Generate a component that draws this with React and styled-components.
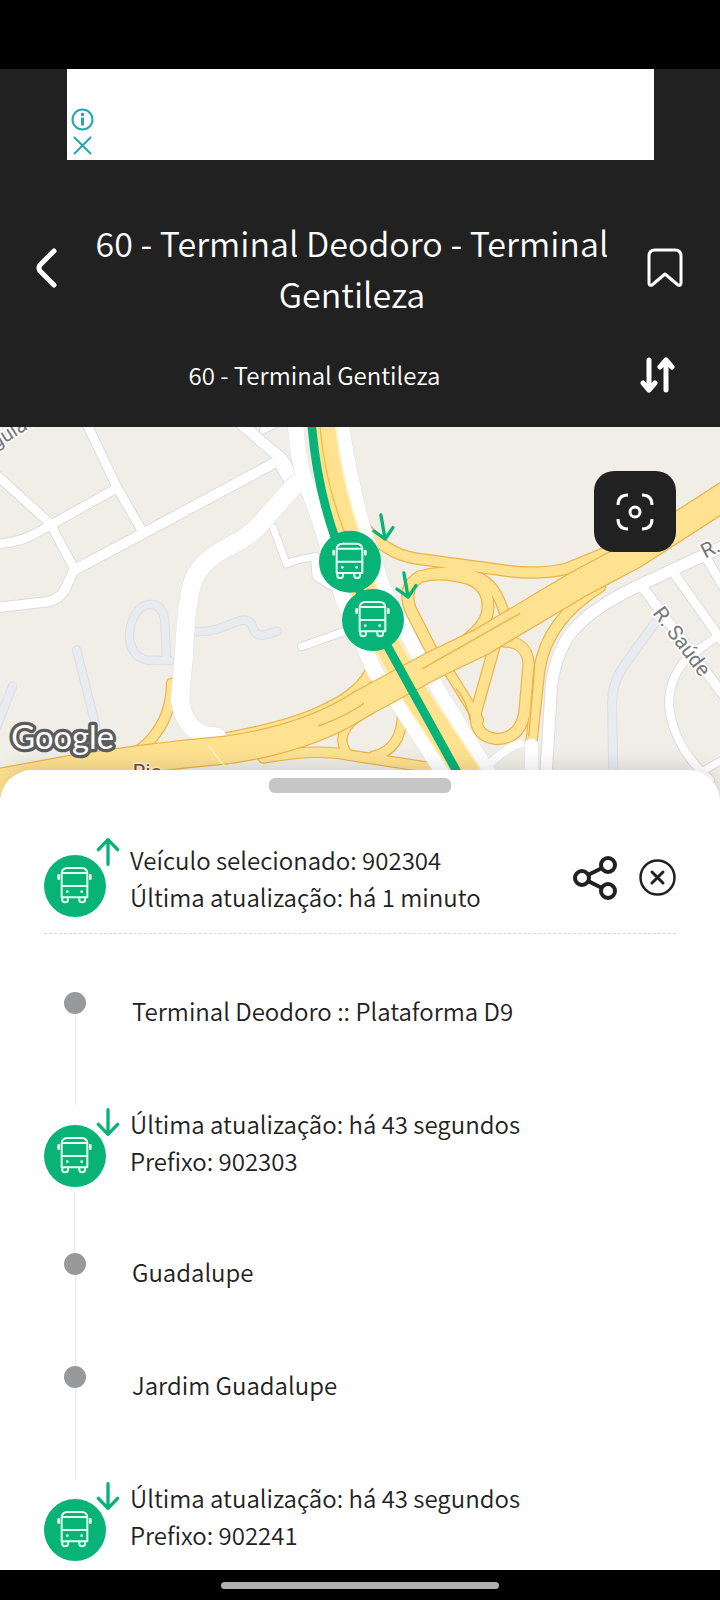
import React from "react";
import styled, { createGlobalStyle } from "styled-components";

const GlobalStyle = createGlobalStyle`
  * {
    box-sizing: border-box;
  }
  body {
    margin: 0;
    background: #fff;
    color: #212121;
    font-family: "Noto Sans CJK JP", "Noto Sans", sans-serif;
    font-size: 24px;
    font-weight: 350;
    line-height: 37px;
  }
`;

const Screen = styled.div`
  display: flex;
  flex-direction: column;
  min-height: 100vh;
`;

const StatusBar = styled.div`
  height: 69px;
  background: #000;
`;

const Header = styled.header`
  background: #212121;
  color: #fff;
  padding-bottom: 34px;
`;

const AdBanner = styled.aside`
  display: flex;
  flex-direction: column;
  justify-content: flex-end;
  align-items: flex-start;
  gap: 5px;
  width: 82%;
  max-width: 587px;
  height: 91px;
  margin: 0 auto 57px;
  padding: 0 4px 5px;
  background: #fff;
`;

const IconButton = styled.button`
  display: flex;
  flex: none;
  padding: 0;
  border: 0;
  background: none;
  color: inherit;
  cursor: pointer;
`;

const AdButton = styled(IconButton)`
  color: #26a5b5;
`;

const TitleRow = styled.div`
  display: flex;
  align-items: center;
  padding: 0 37px 0 35px;
`;

const Title = styled.h1`
  flex: 1;
  margin: 0;
  font-size: 34px;
  font-weight: 350;
  line-height: 51px;
  text-align: center;
`;

const DirectionRow = styled.div`
  display: flex;
  align-items: center;
  margin-top: 37px;
  padding-right: 44px;
`;

const Direction = styled.p`
  flex: 1;
  margin: 0;
  padding-right: 11px;
  text-align: center;
`;

const MapArea = styled.section`
  position: relative;
  height: 376px;
  background: #f0eee7;
`;

const MapCanvas = styled.svg`
  display: block;
  width: 100%;
  height: 100%;
`;

const LocateButton = styled(IconButton)`
  position: absolute;
  top: 44px;
  right: 44px;
  width: 82px;
  height: 81px;
  align-items: center;
  justify-content: center;
  border-radius: 20px;
  background: #212121;
  color: #fff;
`;

const Sheet = styled.main`
  position: relative;
  flex: 1;
  margin-top: -33px;
  padding: 8px 44px 0;
  border-radius: 32px 32px 0 0;
  background: #fff;
  box-shadow: 0 -4px 20px rgba(0, 0, 0, 0.12);
`;

const Handle = styled.div`
  width: 182px;
  height: 15px;
  margin: 0 auto 45px;
  border-radius: 6px;
  background: #c6c6c6;
`;

const Selected = styled.div`
  display: flex;
  align-items: center;
  padding-bottom: 16px;
  border-bottom: 1px dashed #d8d8d8;
`;

const Info = styled.p`
  flex: 1;
  margin: 0 0 0 10px;
`;

const Actions = styled.div`
  display: flex;
  align-items: center;
  gap: 22px;
`;

const Route = styled.ol`
  margin: 58px 0 0;
  padding: 0;
  list-style: none;
`;

const Stop = styled.li`
  display: flex;
  gap: 26px;
  min-height: 113px;
`;

const Vehicle = styled.li`
  display: flex;
  min-height: ${props => (props.$last ? "90px" : "148px")};
`;

const Track = styled.div`
  display: flex;
  flex-direction: column;
  align-items: center;
  width: 62px;
`;

const VehicleTrack = styled(Track)`
  width: 76px;
  padding-top: 3px;
  align-items: flex-start;
`;

const Dot = styled.span`
  width: 22px;
  height: 22px;
  border-radius: 50%;
  background: #97999a;
`;

const Line = styled.span`
  flex: 1;
  width: 1px;
  background: #e9e9e9;
`;

const VehicleLine = styled(Line)`
  margin: 4px 0 0 30px;
`;

const HomeBar = styled.footer`
  display: flex;
  align-items: center;
  justify-content: center;
  height: 30px;
  background: #000;
`;

const HomePill = styled.div`
  width: 278px;
  height: 7px;
  border-radius: 4px;
  background: #b0b0b0;
`;

const GREEN = "#08b378";

const BusBadge = () => (
  <g fill="none" stroke="#e6fff4" strokeWidth="6" strokeLinecap="round">
    <circle cx="93" cy="93" r="93" fill={GREEN} stroke="none" />
    <path d="M53 127V57Q53 39 71 39H112Q130 39 130 57V127Z" strokeLinejoin="round" />
    <path d="M54 54H129M54 93H129" />
    <path d="M44 61V71M139 61V71" strokeWidth="8" />
    <path d="M55 128V135Q55 142 63 142Q72 142 72 135V128M106 128V135Q106 142 114 142Q123 142 123 135V128" />
    <circle cx="70" cy="110" r="4" fill="#e6fff4" stroke="none" />
    <circle cx="113" cy="110" r="4" fill="#e6fff4" stroke="none" />
  </g>
);

const Arrow = ({ up, ...rest }) => (
  <g {...rest}>
    <path
      d={up ? "M0 37V-37M-29 -7L0 -37L29 -7" : "M0 -37V37M-29 7L0 37L29 7"}
      fill="none"
      stroke={GREEN}
      strokeWidth="10"
      strokeLinecap="round"
      strokeLinejoin="round"
    />
  </g>
);

const VehicleIcon = ({ up }) => (
  <svg width="76" height="79" viewBox="0 0 228 237" aria-hidden="true">
    <g transform="translate(0 51)">
      <BusBadge />
    </g>
    <Arrow up={up} transform="translate(192 42)" />
  </svg>
);

// [path, width]
const paleStreets = [
  ["M500 722L494 600Q486 552 450 553Q400 558 388 640Q388 708 440 720L510 722", 22],
  ["M575 635Q620 636 650 628L720 602Q748 596 756 616Q764 648 790 646L832 634", 22],
  ["M230 690L285 910L302 1040", 22],
  ["M38 798L-10 920", 22],
  ["M1975 595L1870 740Q1836 790 1836 850L1842 1160", 24]
];

const streets = [
  ["M-10 165L150 310L222 445", 26],
  ["M-10 372Q60 368 110 338L350 205", 26],
  ["M255 0L350 200L430 340", 26],
  ["M222 450L430 340L830 125", 30],
  ["M-10 563L145 545Q178 538 195 508L222 450", 28],
  ["M710 0L820 95Q862 120 878 190", 32],
  ["M790 30L850 0", 20],
  ["M830 125Q845 160 872 200", 18],
  ["M818 320L860 432Q900 412 950 412", 20],
  ["M945 410L950 470L1000 500", 24],
  ["M905 680L1040 632", 22],
  ["M2200 365L1930 490Q1780 560 1720 630Q1670 690 1655 790L1632 1160", 34],
  ["M2110 400L2200 550", 26],
  ["M2022 460L2200 710", 26],
  ["M1930 505L2200 865", 28],
  ["M2165 640L2060 715Q1996 790 2010 880Q2030 990 2130 1080", 24],
  ["M2200 1000L2080 1070", 20]
];

// these run over the ramps
const mainStreets = [
  ["M885 195L800 290Q755 348 690 378Q610 418 585 470Q560 520 552 700L540 840Q552 922 612 945L650 950", 54],
  ["M480 990L640 945", 14],
  ["M1470 1030Q1530 976 1560 972", 24],
  ["M1594 976L1596 1160", 40],
  ["M886 0Q892 130 926 210L962 310L1030 540L1125 755L1208 870L1325 1050L1390 1160", 46],
  ["M1024 0Q1040 130 1092 330L1150 500L1240 680L1310 800L1462 1050L1530 1160", 42]
];

const avenue = [["M966 0Q980 170 1038 340L1120 600L1230 800L1396 1050L1460 1160", 74]];

const ramps = [
  ["M515 790Q515 890 450 962Q410 1005 340 1025", 28],
  ["M1085 310Q1150 400 1250 416L1490 448Q1610 468 1700 446L1850 385", 30],
  ["M1290 460Q1400 444 1460 486Q1500 520 1518 600", 26],
  ["M1304 710L1232 570Q1206 500 1260 470Q1320 452 1400 474Q1466 494 1464 562Q1464 610 1405 655L1380 690", 32],
  ["M1350 760L1436 900", 26],
  ["M1486 670L1428 876Q1420 950 1490 957Q1560 955 1573 880L1586 730Q1580 664 1510 664", 30],
  ["M1800 500Q1640 600 1618 750L1594 970", 30],
  ["M1110 870Q990 930 1044 1004", 24],
  ["M1120 1008Q1206 990 1207 880", 26],
  ["M790 1014Q950 984 1050 1006L1310 1046", 28],
  ["M640 962Q880 920 980 866Q1090 815 1118 740", 30]
];

const expressway = [
  ["M-60 1098L200 1050Q450 1010 680 990Q930 955 1090 848L1300 735L1440 668L1740 490L1900 405L2200 212", 80]
];

const Roads = ({ items, casing, fill, edge = 6 }) => (
  <g fill="none" strokeLinecap="round" strokeLinejoin="round">
    {items.map(([d, width]) => (
      <path key={"casing" + d} d={d} stroke={casing} strokeWidth={width + edge} />
    ))}
    {items.map(([d, width]) => (
      <path key={d} d={d} stroke={fill} strokeWidth={width} />
    ))}
  </g>
);

const RouteMap = () => (
  <MapCanvas viewBox="0 21 2160 1128" preserveAspectRatio="xMidYMid slice" role="img" aria-label="Mapa da linha">
    <Roads items={paleStreets} casing="#dcdee3" fill="#e8ebf0" />
    <Roads items={streets} casing="#dcdcdf" fill="#fff" />
    <Roads items={ramps} casing="#e9b34a" fill="#fee290" edge={7} />
    <Roads items={mainStreets} casing="#e6e5e3" fill="#fff" edge={4} />
    <Roads items={avenue} casing="#fff0bd" fill="#fee290" edge={10} />
    <path d="M958 0Q972 180 1035 340" fill="none" stroke="#f2bd45" strokeWidth="4" />
    <Roads items={expressway} casing="#e9b34a" fill="#fee290" edge={7} />
    <g fill="none" stroke="#e9b34a" strokeWidth="4">
      <path d="M955 918Q1040 888 1092 850" />
      <path d="M1268 746L1560 580" />
      <path d="M1604 740L1586 950M1368 806Q1400 840 1410 900" />
    </g>
    <path d="M625 978L680 1045" stroke="#fff0bd" strokeWidth="5" />

    <g fill="none" stroke={GREEN} strokeWidth="26">
      <path d="M934 0Q948 190 1004 350L1119 600L1390 1090" />
    </g>
    <g transform="translate(957 332)">
      <BusBadge />
    </g>
    <g transform="translate(1026 507)">
      <BusBadge />
    </g>
    <Arrow transform="translate(1149 321) rotate(-10)" />
    <Arrow transform="translate(1218 495) rotate(-10)" />

    <g
      fontFamily="Roboto, sans-serif"
      fontSize="62"
      fontWeight="400"
      fill="#75777b"
      stroke="#fff"
      strokeWidth="10"
      strokeLinejoin="round"
      paintOrder="stroke"
    >
      <text transform="translate(-14 88) rotate(-32)">guiar</text>
      <text transform="translate(2116 416) rotate(-27)">R.</text>
      <text transform="translate(1956 580) rotate(53)">R. Saúde</text>
      <text x="398" y="1077" fill="#6b4a3a" stroke="#fff3cf">
        Rio
      </text>
    </g>
    <text
      x="34"
      y="986"
      fontFamily="Lato, sans-serif"
      fontSize="98"
      fontWeight="400"
      fill="#fff"
      stroke="#5c5c5c"
      strokeWidth="20"
      strokeLinejoin="round"
      paintOrder="stroke"
    >
      Google
    </text>
  </MapCanvas>
);

const BackIcon = () => (
  <svg width="22" height="40" viewBox="0 0 22 40" fill="none" stroke="currentColor" strokeWidth="5" strokeLinecap="round" strokeLinejoin="round">
    <path d="M19 3L5 17Q3 20 5 23L19 37" />
  </svg>
);

const BookmarkIcon = () => (
  <svg width="36" height="40" viewBox="0 0 36 40" fill="none" stroke="currentColor" strokeWidth="3" strokeLinejoin="round">
    <path d="M2 8Q2 2 8 2H28Q34 2 34 8V35Q34 38 31 37L18 26L5 37Q2 38 2 35Z" />
  </svg>
);

const SwapIcon = () => (
  <svg width="36" height="36" viewBox="0 0 36 36" fill="none" stroke="currentColor" strokeWidth="5" strokeLinecap="round" strokeLinejoin="round">
    <path d="M9 3V32M3 26L9 33L15 26M26 33V4M20 10L26 3L32 10" />
  </svg>
);

const LocateIcon = () => (
  <svg width="38" height="38" viewBox="0 0 38 38" fill="none" stroke="currentColor" strokeWidth="3">
    <path d="M2 12Q2 2 12 2M26 2Q36 2 36 12M36 26Q36 36 26 36M12 36Q2 36 2 26" />
    <circle cx="19" cy="19" r="5" />
  </svg>
);

const ShareIcon = () => (
  <svg width="44" height="44" viewBox="0 0 44 44" fill="none" stroke="currentColor" strokeWidth="4">
    <circle cx="9" cy="22" r="7" />
    <circle cx="35" cy="9" r="7" />
    <circle cx="35" cy="35" r="7" />
    <path d="M15 19L29 12M15 25L29 32" />
  </svg>
);

const CloseIcon = () => (
  <svg width="37" height="37" viewBox="0 0 37 37" fill="none" stroke="currentColor" strokeLinecap="round">
    <circle cx="18.5" cy="18.5" r="17" strokeWidth="2.5" />
    <path d="M13 13L24 24M24 13L13 24" strokeWidth="3" />
  </svg>
);

const AdInfoIcon = () => (
  <svg width="23" height="23" viewBox="0 0 23 23" fill="none" stroke="currentColor" strokeWidth="2">
    <circle cx="11.5" cy="11.5" r="10" />
    <path d="M11.5 9.5V17.5" strokeWidth="3" />
    <path d="M11.5 5V8" strokeWidth="3" />
  </svg>
);

const AdCloseIcon = () => (
  <svg width="23" height="19" viewBox="0 0 23 19" fill="none" stroke="currentColor" strokeWidth="2">
    <path d="M3 1L20 18M20 1L3 18" />
  </svg>
);

const route = [
  { stop: "Terminal Deodoro :: Plataforma D9" },
  { prefix: "902303", updated: "há 43 segundos" },
  { stop: "Guadalupe" },
  { stop: "Jardim Guadalupe" },
  { prefix: "902241", updated: "há 43 segundos" }
];

class App extends React.Component {
  renderItem(item, index) {
    if (item.stop) {
      return (
        <Stop key={item.stop}>
          <Track>
            <Dot />
            <Line />
          </Track>
          {item.stop}
        </Stop>
      );
    }
    const last = index === route.length - 1;
    return (
      <Vehicle key={item.prefix} $last={last}>
        <VehicleTrack>
          <VehicleIcon />
          {!last && <VehicleLine />}
        </VehicleTrack>
        <Info>
          Última atualização: {item.updated}
          <br />
          Prefixo: {item.prefix}
        </Info>
      </Vehicle>
    );
  }

  render() {
    return (
      <Screen>
        <GlobalStyle />
        <StatusBar />
        <Header>
          <AdBanner>
            <AdButton aria-label="Sobre o anúncio">
              <AdInfoIcon />
            </AdButton>
            <AdButton aria-label="Fechar anúncio">
              <AdCloseIcon />
            </AdButton>
          </AdBanner>
          <TitleRow>
            <IconButton aria-label="Voltar">
              <BackIcon />
            </IconButton>
            <Title>60 - Terminal Deodoro - Terminal Gentileza</Title>
            <IconButton aria-label="Salvar linha">
              <BookmarkIcon />
            </IconButton>
          </TitleRow>
          <DirectionRow>
            <Direction>60 - Terminal Gentileza</Direction>
            <IconButton aria-label="Inverter sentido">
              <SwapIcon />
            </IconButton>
          </DirectionRow>
        </Header>
        <MapArea>
          <RouteMap />
          <LocateButton aria-label="Centralizar mapa">
            <LocateIcon />
          </LocateButton>
        </MapArea>
        <Sheet>
          <Handle />
          <Selected>
            <VehicleIcon up />
            <Info>
              Veículo selecionado: 902304
              <br />
              Última atualização: há 1 minuto
            </Info>
            <Actions>
              <IconButton aria-label="Compartilhar">
                <ShareIcon />
              </IconButton>
              <IconButton aria-label="Fechar">
                <CloseIcon />
              </IconButton>
            </Actions>
          </Selected>
          <Route>{route.map(this.renderItem)}</Route>
        </Sheet>
        <HomeBar>
          <HomePill />
        </HomeBar>
      </Screen>
    );
  }
}

export default App;
